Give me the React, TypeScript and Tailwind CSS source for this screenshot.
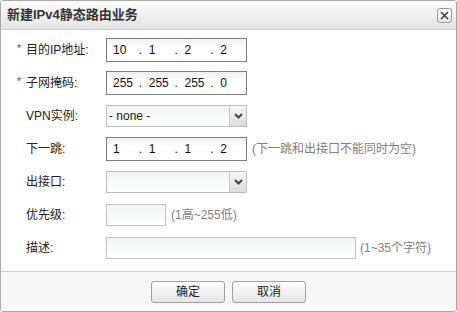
import React from "react";

const font = { fontFamily: '"Liberation Sans", "Noto Sans CJK SC", sans-serif' };

const Star = () => <span className="w-[9px] text-[#e02020] text-[11px] leading-none -mt-[2px]">*</span>;

const Label: React.FC<{ text: string; required?: boolean }> = ({ text, required }) => (
  <div className="w-[105px] pl-[16px] flex items-center text-[12px] text-[#222]">
    {required ? <Star /> : <span className="w-[9px]" />}
    <span>{text}</span>
  </div>
);

const IpInput: React.FC<{ parts: string[] }> = ({ parts }) => (
  <div className="w-[141px] h-[24px] border border-[#7d7d7d] bg-gradient-to-b from-[#f1f1f1] to-white to-40% flex items-center pl-[6px] text-[12px] text-[#111]">
    {parts.map((p, i) => (
      <React.Fragment key={i}>
        <span className="w-[26px]">{p}</span>
        {i < 3 && <span className="w-[10px]">.</span>}
      </React.Fragment>
    ))}
  </div>
);

const Select: React.FC<{ value?: string }> = ({ value }) => (
  <div className="w-[141px] h-[22px] border border-[#bdbdbd] bg-gradient-to-b from-[#f1f3f3] to-white flex text-[12px] text-[#222]">
    <div className="flex-1 flex items-center pl-[2px]">{value}</div>
    <div className="w-[17px] border-l border-[#c8c8c8] bg-gradient-to-b from-[#f7f7f7] to-[#dcdcdc] flex items-center justify-center">
      <svg width="9" height="6" viewBox="0 0 9 6">
        <path d="M1 1 L4.5 4.5 L8 1" fill="none" stroke="#444" strokeWidth="2" />
      </svg>
    </div>
  </div>
);

const Hint: React.FC<{ text: string; className?: string }> = ({ text, className }) => (
  <span className={`text-[12px] text-[#808080] ${className ?? ""}`}>{text}</span>
);

const Row: React.FC<{ children: React.ReactNode }> = ({ children }) => (
  <div className="h-[33px] flex items-center">{children}</div>
);

export default function App() {
  return (
    <div style={font} className="w-[457px] h-[312px] flex flex-col border border-[#a9a9a9] rounded-[3px] overflow-hidden bg-white">
      {/* Title bar */}
      <div className="h-[29px] shrink-0 border-b border-[#cfcfcf] bg-gradient-to-b from-[#fbfbfb] to-[#e4e4e4] flex items-center justify-between pl-[6px] pr-[4px]">
        <span className="text-[13px] font-bold text-[#333]">新建IPv4静态路由业务</span>
        <button className="w-[15px] h-[15px] border border-[#9a9a9a] rounded-[3px] bg-gradient-to-b from-white to-[#e6e6e6] flex items-center justify-center">
          <svg width="9" height="9" viewBox="0 0 9 9">
            <path d="M1 1 L8 8 M8 1 L1 8" stroke="#333" strokeWidth="1.4" />
          </svg>
        </button>
      </div>

      {/* Form */}
      <div className="flex-1 pt-[3px]">
        <Row>
          <Label text="目的IP地址:" required />
          <IpInput parts={["10", "1", "2", "2"]} />
        </Row>
        <Row>
          <Label text="子网掩码:" required />
          <IpInput parts={["255", "255", "255", "0"]} />
        </Row>
        <Row>
          <Label text="VPN实例:" />
          <Select value="- none -" />
        </Row>
        <Row>
          <Label text="下一跳:" />
          <IpInput parts={["1", "1", "1", "2"]} />
          <Hint text="(下一跳和出接口不能同时为空)" className="ml-[5px]" />
        </Row>
        <Row>
          <Label text="出接口:" />
          <Select />
        </Row>
        <Row>
          <Label text="优先级:" />
          <div className="w-[60px] h-[22px] border border-[#c2c2c2] bg-gradient-to-b from-[#f1f3f3] to-white" />
          <Hint text="(1高~255低)" className="ml-[5px]" />
        </Row>
        <Row>
          <Label text="描述:" />
          <div className="w-[250px] h-[22px] border border-[#c2c2c2] bg-gradient-to-b from-[#f1f3f3] to-white" />
          <Hint text="(1~35个字符)" className="ml-[4px]" />
        </Row>
      </div>

      {/* Footer */}
      <div className="h-[40px] shrink-0 border-t border-[#d0d0d0] bg-[#f7f7f7] flex items-center justify-center gap-[7px]">
        {["确定", "取消"].map(t => (
          <button key={t} className="w-[74px] h-[22px] border border-[#a0a0a0] rounded-[3px] bg-gradient-to-b from-white to-[#e4e4e4] text-[12px] text-[#222]">
            {t}
          </button>
        ))}
      </div>
    </div>
  );
}
